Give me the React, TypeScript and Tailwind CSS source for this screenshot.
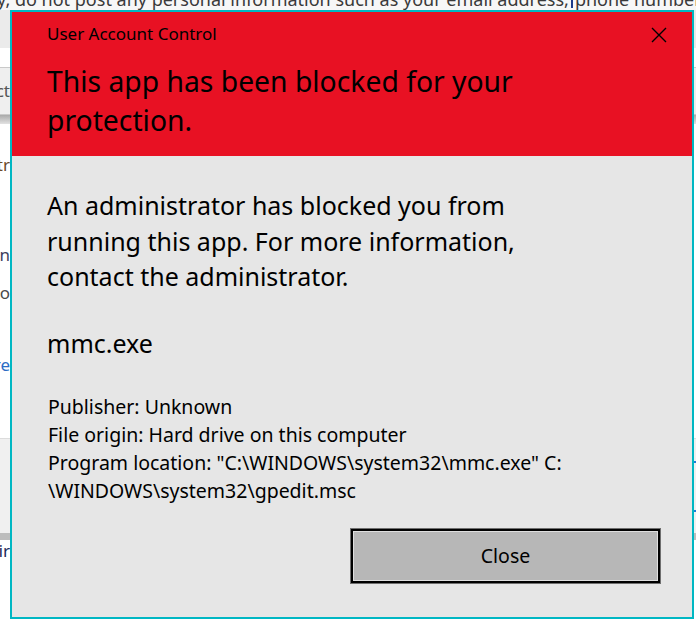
// Bits of the web page that show around the dialog edges
function Fragment({ text, className }: { text: string; className: string }) {
  return (
    <div className={`flex h-[22px] w-[10px] justify-end overflow-hidden whitespace-nowrap text-[17px] leading-[22px] ${className}`}>
      {text}
    </div>
  );
}

function CloseGlyph() {
  return (
    <svg width="16" height="16" viewBox="0 0 16 16" fill="none" stroke="black" strokeWidth="1.4">
      <path d="M1 1 L15 15 M15 1 L1 15" />
    </svg>
  );
}

function BackgroundPage() {
  return (
    <div className="flex h-[622px] w-[696px] flex-col overflow-hidden bg-white font-['Noto_Sans',sans-serif]">
      <div className="h-[10px] shrink-0 bg-[#f7f7f7]">
        <div className="-mt-[12px] ml-[-3px] whitespace-nowrap text-[18px] leading-[22px] text-[#3a3a3a]">
          y, do not post any personal information such as your email address,<span className="mx-[2px] inline-block h-[14px] w-[2px] bg-[#1d3a8a] align-middle" />phone number
        </div>
      </div>
      <div className="h-[38px] shrink-0 bg-[#ebebeb]" />
      <div className="h-[19px] shrink-0 bg-white" />
      <div className="flex h-[48px] shrink-0 items-center border-y border-[#c9c9c9] bg-[#efefef]">
        <Fragment text="ct" className="text-[#555]" />
      </div>
      <div className="h-[9px] shrink-0 bg-gradient-to-b from-[#a9a9a9] to-[#e2e2e2]" />
      <div className="flex flex-1 flex-col">
        <div className="h-[30px]" />
        <Fragment text="Arbitr" className="text-[#6b4a2a]" />
        <div className="h-[68px]" />
        <Fragment text="An" className="text-[#3d3d5c]" />
        <div className="h-[16px]" />
        <Fragment text="co" className="text-[#4a4a4a]" />
        <div className="h-[50px]" />
        <Fragment text="More" className="text-[#2b6cc4]" />
        <div className="h-[62px]" />
      </div>
      <div className="relative h-[95px] shrink-0 border-t border-[#dcdcdc] bg-[#f0f0f0]">
        <div className="absolute right-0 top-[22px] h-[2px] w-[2px] bg-[#1e7ad6]" />
        <div className="absolute right-0 top-[71px] h-[2px] w-[2px] bg-[#1e7ad6]" />
      </div>
      <div className="h-[7px] shrink-0 bg-[#bdbdbd]" />
      <div className="h-[22px] shrink-0">
        <Fragment text="Confir" className="text-[#1b2a5a]" />
      </div>
      <div className="flex-1" />
    </div>
  );
}

export default function App() {
  return (
    <div className="relative h-[622px] w-[696px] overflow-hidden">
      <BackgroundPage />

      {/* UAC dialog */}
      <div className="absolute left-[10px] top-[10px] flex h-[609px] w-[684px] flex-col border-2 border-[#00b7c3] bg-[#e6e6e6] font-['Noto_Sans',sans-serif] text-black">
        <div className="flex flex-col bg-[#e81123] pb-[17px] pl-[35px] pr-[25px] pt-[10px]">
          <div className="flex items-center justify-between">
            <span className="text-[17px] leading-[24px]">User Account Control</span>
            <span className="mt-[2px]">
              <CloseGlyph />
            </span>
          </div>
          <h1 className="mt-[16px] max-w-[520px] text-[28.3px] font-normal leading-[38.5px]">
            This app has been blocked for your protection.
          </h1>
        </div>

        <div className="flex flex-1 flex-col px-[35px] pt-[32px]">
          <p className="max-w-[520px] text-[25px] leading-[35.5px]">
            An administrator has blocked you from running this app. For more information, contact the administrator.
          </p>
          <p className="mt-[31.5px] text-[25px] leading-[35.5px]">mmc.exe</p>
          <div className="mt-[31px] whitespace-nowrap pl-[1px] text-[19.5px] leading-[28px]">
            <div>Publisher: Unknown</div>
            <div>File origin: Hard drive on this computer</div>
            <div>
              Program location: "C:\WINDOWS\system32\mmc.exe" C:
              <br />
              \WINDOWS\system32\gpedit.msc
            </div>
          </div>
        </div>

        <div className="flex justify-end pb-[33px] pr-[31px]">
          <button
            type="button"
            className="flex h-[56px] w-[311px] items-stretch border border-[#6f6f6f] bg-black p-[2px]"
          >
            <span className="flex flex-1 items-center justify-center border border-[#dedede] bg-[#b7b7b7] text-[19.5px] leading-none">
              Close
            </span>
          </button>
        </div>
      </div>
    </div>
  );
}
